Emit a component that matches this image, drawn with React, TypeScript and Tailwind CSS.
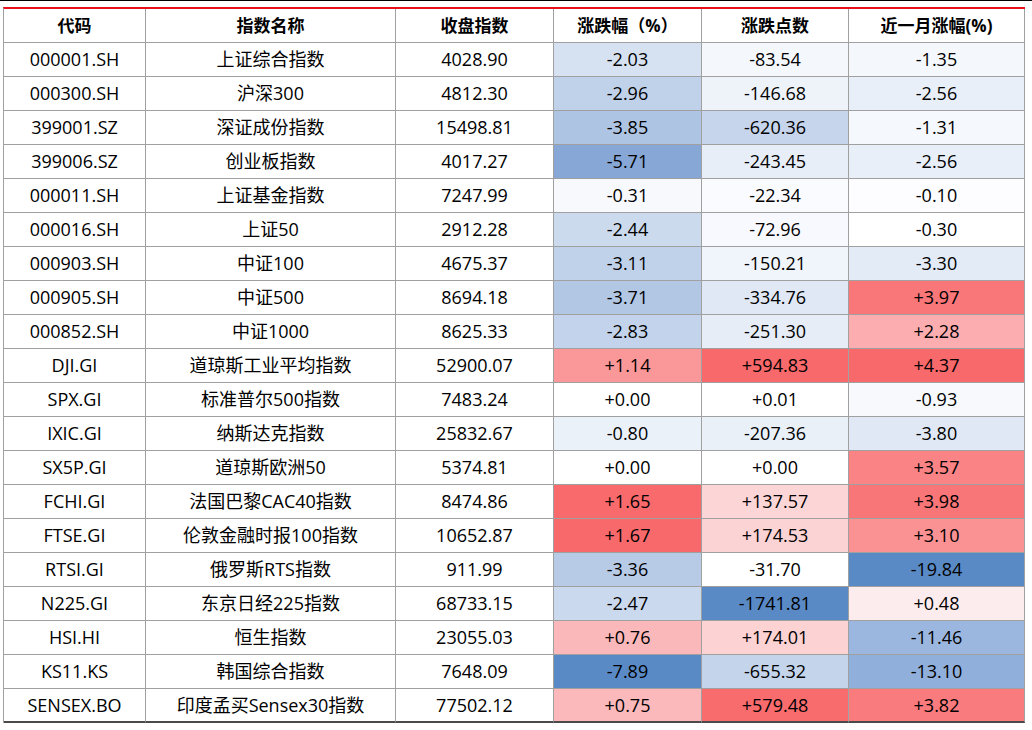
import React from "react";

type Row = {
    code: string;
    name: string;
    close: string;
    pct: [string, string];
    pts: [string, string];
    month: [string, string];
};

// cell colours follow the sheet's blue-white-red scale, picked per cell
const ROWS: Row[] = [
    { code: "000001.SH", name: "上证综合指数", close: "4028.90", pct: ["-2.03", "bg-[#d6e1f1]"], pts: ["-83.54", "bg-[#f4f7fc]"], month: ["-1.35", "bg-[#f4f7fc]"] },
    { code: "000300.SH", name: "沪深300", close: "4812.30", pct: ["-2.96", "bg-[#c0d1ea]"], pts: ["-146.68", "bg-[#eef3fa]"], month: ["-2.56", "bg-[#e9eff8]"] },
    { code: "399001.SZ", name: "深证成份指数", close: "15498.81", pct: ["-3.85", "bg-[#aec4e3]"], pts: ["-620.36", "bg-[#c6d5eb]"], month: ["-1.31", "bg-[#f5f8fc]"] },
    { code: "399006.SZ", name: "创业板指数", close: "4017.27", pct: ["-5.71", "bg-[#87a8d6]"], pts: ["-243.45", "bg-[#e8eef8]"], month: ["-2.56", "bg-[#e9eff8]"] },
    { code: "000011.SH", name: "上证基金指数", close: "7247.99", pct: ["-0.31", "bg-[#f7f9fd]"], pts: ["-22.34", "bg-[#fafbfe]"], month: ["-0.10", "bg-[#fdfdff]"] },
    { code: "000016.SH", name: "上证50", close: "2912.28", pct: ["-2.44", "bg-[#ccdaee]"], pts: ["-72.96", "bg-[#f8f9fe]"], month: ["-0.30", "bg-[#ffffff]"] },
    { code: "000903.SH", name: "中证100", close: "4675.37", pct: ["-3.11", "bg-[#c0d1ea]"], pts: ["-150.21", "bg-[#f0f4fb]"], month: ["-3.30", "bg-[#e3ebf6]"] },
    { code: "000905.SH", name: "中证500", close: "8694.18", pct: ["-3.71", "bg-[#b1c7e4]"], pts: ["-334.76", "bg-[#dfe8f4]"], month: ["+3.97", "bg-[#f97679]"] },
    { code: "000852.SH", name: "中证1000", close: "8625.33", pct: ["-2.83", "bg-[#c2d3eb]"], pts: ["-251.30", "bg-[#e6edf7]"], month: ["+2.28", "bg-[#fbadaf]"] },
    { code: "DJI.GI", name: "道琼斯工业平均指数", close: "52900.07", pct: ["+1.14", "bg-[#fa9799]"], pts: ["+594.83", "bg-[#f8696b]"], month: ["+4.37", "bg-[#f8696b]"] },
    { code: "SPX.GI", name: "标准普尔500指数", close: "7483.24", pct: ["+0.00", "bg-[#ffffff]"], pts: ["+0.01", "bg-[#ffffff]"], month: ["-0.93", "bg-[#f7f9fd]"] },
    { code: "IXIC.GI", name: "纳斯达克指数", close: "25832.67", pct: ["-0.80", "bg-[#ebf1f9]"], pts: ["-207.36", "bg-[#eaf0f8]"], month: ["-3.80", "bg-[#dfe8f4]"] },
    { code: "SX5P.GI", name: "道琼斯欧洲50", close: "5374.81", pct: ["+0.00", "bg-[#ffffff]"], pts: ["+0.00", "bg-[#ffffff]"], month: ["+3.57", "bg-[#f98385]"] },
    { code: "FCHI.GI", name: "法国巴黎CAC40指数", close: "8474.86", pct: ["+1.65", "bg-[#f86a6c]"], pts: ["+137.57", "bg-[#fcd6d7]"], month: ["+3.98", "bg-[#f97678]"] },
    { code: "FTSE.GI", name: "伦敦金融时报100指数", close: "10652.87", pct: ["+1.67", "bg-[#f8696b]"], pts: ["+174.53", "bg-[#fcd3d4]"], month: ["+3.10", "bg-[#fa9294]"] },
    { code: "RTSI.GI", name: "俄罗斯RTS指数", close: "911.99", pct: ["-3.36", "bg-[#b8cbe6]"], pts: ["-31.70", "bg-[#ffffff]"], month: ["-19.84", "bg-[#5a8ac6]"] },
    { code: "N225.GI", name: "东京日经225指数", close: "68733.15", pct: ["-2.47", "bg-[#cbd9ee]"], pts: ["-1741.81", "bg-[#5a8ac6]"], month: ["+0.48", "bg-[#fdeced]"] },
    { code: "HSI.HI", name: "恒生指数", close: "23055.03", pct: ["+0.76", "bg-[#fbb8ba]"], pts: ["+174.01", "bg-[#fcd2d3]"], month: ["-11.46", "bg-[#9cb7df]"] },
    { code: "KS11.KS", name: "韩国综合指数", close: "7648.09", pct: ["-7.89", "bg-[#5a8ac6]"], pts: ["-655.32", "bg-[#c4d4eb]"], month: ["-13.10", "bg-[#90afdb]"] },
    { code: "SENSEX.BO", name: "印度孟买Sensex30指数", close: "77502.12", pct: ["+0.75", "bg-[#fbb9bb]"], pts: ["+579.48", "bg-[#f86c6e]"], month: ["+3.82", "bg-[#f97b7d]"] },
];

const HEADERS = ["代码", "指数名称", "收盘指数", "涨跌幅（%）", "涨跌点数", "近一月涨幅(%)"];

function Cell({ children, className = "", last = false }: { children: React.ReactNode; className?: string; last?: boolean }) {
    return (
        <div
            className={
                "h-[34px] flex items-center justify-center border-r border-[#a0a0a0] whitespace-nowrap " +
                (last ? "border-b-2 border-b-[#4a4a4a] " : "border-b ") +
                className
            }
        >
            {children}
        </div>
    );
}

export default function App() {
    return (
        <div className="w-[1032px] h-[730px] bg-white overflow-hidden text-black" style={{ fontFamily: '"Open Sans", "Noto Sans CJK SC", sans-serif' }}>
            <div className="h-px w-full bg-black" />
            <div className="ml-[3px] mt-[6px] w-[1022px] border-l border-t-2 border-l-[#a0a0a0] border-t-[#e8101c] grid grid-cols-[142px_250px_158px_148px_147px_176px]">
                {HEADERS.map((h) => (
                    <Cell key={h} className="text-[17px] font-bold">{h}</Cell>
                ))}
                {ROWS.map((r, i) => {
                    const last = i === ROWS.length - 1;
                    return (
                        <React.Fragment key={r.code}>
                            <Cell last={last} className="text-[18px]">{r.code}</Cell>
                            <Cell last={last} className="text-[18px]">{r.name}</Cell>
                            <Cell last={last} className="text-[18px]">{r.close}</Cell>
                            <Cell last={last} className={"text-[18px] " + r.pct[1]}>{r.pct[0]}</Cell>
                            <Cell last={last} className={"text-[18px] " + r.pts[1]}>{r.pts[0]}</Cell>
                            <Cell last={last} className={"text-[18px] " + r.month[1]}>{r.month[0]}</Cell>
                        </React.Fragment>
                    );
                })}
            </div>
        </div>
    );
}
